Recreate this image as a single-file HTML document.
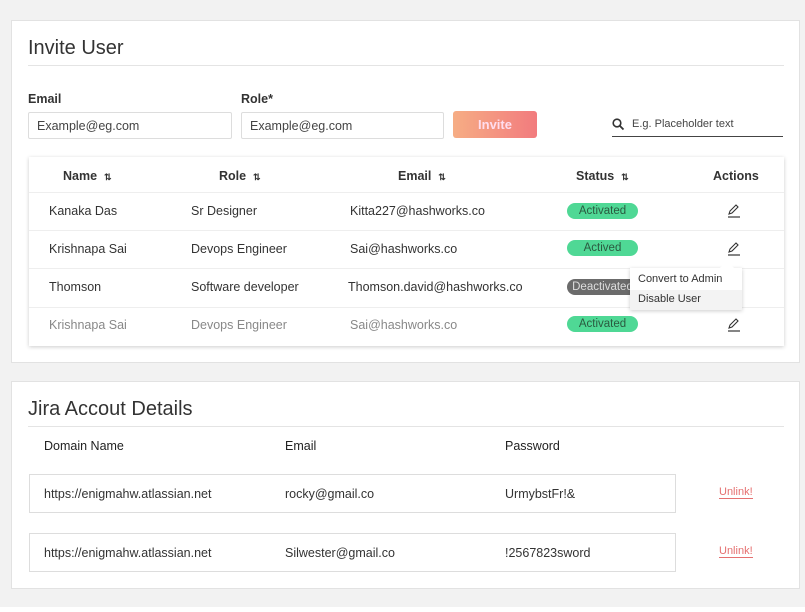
<!DOCTYPE html>
<html><head><style>
*{box-sizing:border-box;margin:0;padding:0}
body{width:805px;height:612px;background:#fff;font-family:"Liberation Sans",sans-serif;color:#333;position:relative;overflow:hidden}
.bg{position:absolute;left:0;top:0;width:805px;height:607px;background:#f2f2f2}
.card{position:absolute;left:11px;width:789px;background:#fff;border:1px solid #e2e2e2}
.a{position:absolute;white-space:nowrap}
.title{font-size:20px;color:#333}
.lbl{font-size:12.5px;color:#333;font-weight:bold}
.inp{position:absolute;height:27px;border:1px solid #ddd;border-radius:2px;font-size:12.5px;padding:6px 8px;color:#444}
.th{font-size:12.5px;font-weight:bold;color:#333}
.td{font-size:12.5px;color:#333}
.badge{position:absolute;left:567px;width:71px;height:16px;border-radius:8px;background:#4fd895;color:#2b5a40;font-size:11.5px;text-align:center;line-height:16px}
.hr{position:absolute;left:0;right:0;height:1px;background:#eee}
.pen{position:absolute;left:726px}
</style></head><body>
<div class="bg"></div>
<div class="card" style="top:20px;height:343px"></div>
<div class="card" style="top:381px;height:208px"></div>

<div class="a title" style="left:28px;top:37px">Invite User</div>
<div class="a" style="left:28px;top:65px;width:756px;height:1px;background:#e4e4e4"></div>
<div class="a lbl" style="left:28px;top:92px">Email</div>
<div class="a lbl" style="left:241px;top:92px">Role*</div>
<div class="inp" style="left:28px;top:112px;width:204px">Example@eg.com</div>
<div class="inp" style="left:241px;top:112px;width:203px">Example@eg.com</div>
<div class="a" style="left:453px;top:111px;width:84px;height:27px;border-radius:3px;background:linear-gradient(90deg,#f6ad84,#f27b7e);color:#fde;font-size:13px;text-align:center;line-height:27px;font-weight:bold">Invite</div>
<svg class="a" style="left:612px;top:118px" width="13" height="13" viewBox="0 0 13 13"><circle cx="5" cy="5" r="3.8" fill="none" stroke="#333" stroke-width="1.6"/><path d="M8 8l3.5 3.5" stroke="#333" stroke-width="1.8"/></svg>
<div class="a" style="left:632px;top:118px;font-size:11px;color:#444">E.g. Placeholder text</div>
<div class="a" style="left:612px;top:136px;width:171px;height:1px;background:#444"></div>

<div class="a" style="left:29px;top:157px;width:755px;height:189px;background:#fff;box-shadow:0 1px 4px rgba(0,0,0,.2)">
 <div class="hr" style="top:35px"></div><div class="hr" style="top:73px"></div><div class="hr" style="top:111px"></div><div class="hr" style="top:150px"></div>
</div>
<div class="a th" style="left:63px;top:169px">Name &nbsp;<span style="font-size:9px">⇅</span></div>
<div class="a th" style="left:219px;top:169px">Role &nbsp;<span style="font-size:9px">⇅</span></div>
<div class="a th" style="left:398px;top:169px">Email &nbsp;<span style="font-size:9px">⇅</span></div>
<div class="a th" style="left:576px;top:169px">Status &nbsp;<span style="font-size:9px">⇅</span></div>
<div class="a th" style="left:713px;top:169px">Actions</div>

<div class="a td" style="left:49px;top:204px">Kanaka Das</div>
<div class="a td" style="left:191px;top:204px">Sr Designer</div>
<div class="a td" style="left:350px;top:204px">Kitta227@hashworks.co</div>
<div class="badge" style="top:203px">Activated</div>

<div class="a td" style="left:49px;top:242px">Krishnapa Sai</div>
<div class="a td" style="left:191px;top:242px">Devops Engineer</div>
<div class="a td" style="left:350px;top:242px">Sai@hashworks.co</div>
<div class="badge" style="top:240px">Actived</div>

<div class="a td" style="left:49px;top:280px">Thomson</div>
<div class="a td" style="left:191px;top:280px">Software developer</div>
<div class="a td" style="left:348px;top:280px">Thomson.david@hashworks.co</div>
<div class="badge" style="top:279px;background:#6b6b6b;color:#ddd">Deactivated</div>

<div class="a td" style="left:49px;top:318px;color:#888">Krishnapa Sai</div>
<div class="a td" style="left:191px;top:318px;color:#888">Devops Engineer</div>
<div class="a td" style="left:350px;top:318px;color:#888">Sai@hashworks.co</div>
<div class="badge" style="top:316px">Activated</div>

<svg class="pen" style="top:203px" width="16" height="15" viewBox="0 0 16 15"><path d="M3 11l1-3 6-6 2 2-6 6z" fill="none" stroke="#333" stroke-width="1.1"/><path d="M2 14h12" stroke="#333" stroke-width="1.2"/></svg>
<svg class="pen" style="top:241px" width="16" height="15" viewBox="0 0 16 15"><path d="M3 11l1-3 6-6 2 2-6 6z" fill="none" stroke="#333" stroke-width="1.1"/><path d="M2 14h12" stroke="#333" stroke-width="1.2"/></svg>
<svg class="pen" style="top:317px" width="16" height="15" viewBox="0 0 16 15"><path d="M3 11l1-3 6-6 2 2-6 6z" fill="none" stroke="#333" stroke-width="1.1"/><path d="M2 14h12" stroke="#333" stroke-width="1.2"/></svg>

<div class="a" style="left:630px;top:268px;width:112px;height:42px;background:#fff;box-shadow:0 1px 4px rgba(0,0,0,.2)">
 <div style="position:absolute;right:10px;top:-5px;width:10px;height:10px;background:#fff;transform:rotate(45deg)"></div>
 <div style="position:absolute;left:8px;top:5px;font-size:11px;color:#333">Convert to Admin</div>
 <div style="position:absolute;left:0;top:22px;width:112px;height:20px;background:#f3f3f3;font-size:11px;color:#333;padding:3px 8px">Disable User</div>
</div>

<div class="a title" style="left:28px;top:398px">Jira Accout Details</div>
<div class="a" style="left:28px;top:426px;width:756px;height:1px;background:#e4e4e4"></div>
<div class="a td" style="left:44px;top:439px;color:#222">Domain Name</div>
<div class="a td" style="left:285px;top:439px;color:#222">Email</div>
<div class="a td" style="left:505px;top:439px;color:#222">Password</div>
<div class="a" style="left:29px;top:474px;width:647px;height:39px;border:1px solid #ddd"></div>
<div class="a" style="left:29px;top:533px;width:647px;height:39px;border:1px solid #ddd"></div>
<div class="a td" style="left:44px;top:487px">https://enigmahw.atlassian.net</div>
<div class="a td" style="left:285px;top:487px">rocky@gmail.co</div>
<div class="a td" style="left:505px;top:487px">UrmybstFr!&amp;</div>
<div class="a td" style="left:44px;top:546px">https://enigmahw.atlassian.net</div>
<div class="a td" style="left:285px;top:546px">Silwester@gmail.co</div>
<div class="a td" style="left:505px;top:546px">!2567823sword</div>
<div class="a" style="left:719px;top:486px;font-size:11px;color:#e57070;border-bottom:1px solid #e57070">Unlink!</div>
<div class="a" style="left:719px;top:545px;font-size:11px;color:#e57070;border-bottom:1px solid #e57070">Unlink!</div>
</body></html>
